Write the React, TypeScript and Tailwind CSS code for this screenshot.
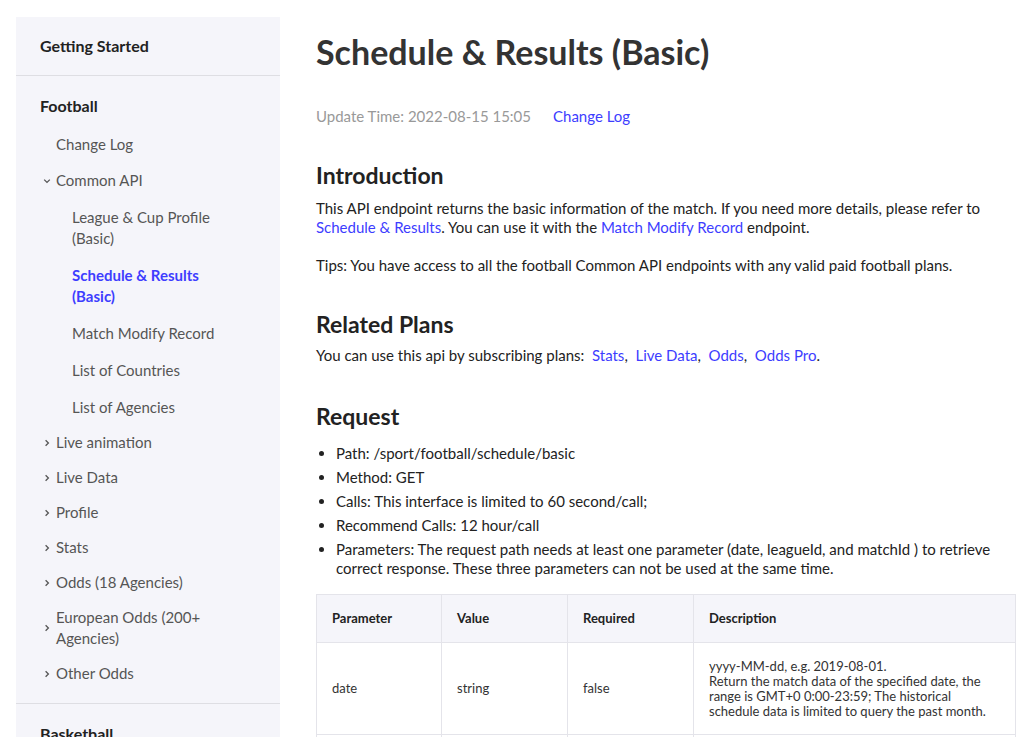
import React from "react";

const Chevron: React.FC<{ down?: boolean }> = ({ down }) => (
  <svg
    width="10"
    height="10"
    viewBox="0 0 10 10"
    className="shrink-0"
    fill="none"
    stroke="#555"
    strokeWidth="1.3"
  >
    {down ? <path d="M2.2 3.6 L5 6.4 L7.8 3.6" /> : <path d="M3.6 2.2 L6.4 5 L3.6 7.8" />}
  </svg>
);

const subItems = [
  { label: "League & Cup Profile (Basic)" },
  { label: "Schedule & Results (Basic)", active: true },
  { label: "Match Modify Record" },
  { label: "List of Countries" },
  { label: "List of Agencies" },
];

const groups = [
  "Live animation",
  "Live Data",
  "Profile",
  "Stats",
  "Odds (18 Agencies)",
  "European Odds (200+ Agencies)",
  "Other Odds",
];

const Sidebar: React.FC = () => (
  <aside className="w-[264px] shrink-0 bg-[#f5f5fa] text-[15px] text-[#555]">
    <div className="px-6 pt-[18px] pb-[18px] border-b border-[#dedee3]">
      <div className="text-[16px] leading-[22px] font-bold text-[#222]">Getting Started</div>
    </div>
    <div className="px-6 pt-[19px] pb-[19px] border-b border-[#dedee3]">
      <div className="text-[16px] leading-[22px] font-bold text-[#222] mb-[17px]">Football</div>
      <div className="pl-4 leading-[21px]">
        <div className="mb-[15px]">Change Log</div>
        <div className="flex items-center gap-[4px] -ml-[14px] mb-[16px]">
          <Chevron down />
          <span>Common API</span>
        </div>
        <div className="pl-4 flex flex-col gap-[16px] pr-10 mb-[14px]">
          {subItems.map((s) =>
            s.active ? (
              <div key={s.label} className="text-[#3d3dff] font-bold">
                {s.label}
              </div>
            ) : (
              <div key={s.label}>{s.label}</div>
            )
          )}
        </div>
        <div className="flex flex-col gap-[14px] -ml-[14px] pr-10">
          {groups.map((g) => (
            <div key={g} className="flex items-center gap-[4px]">
              <Chevron />
              <span>{g}</span>
            </div>
          ))}
        </div>
      </div>
    </div>
    <div className="px-6 pt-[19px] pb-4">
      <div className="text-[16px] leading-[22px] font-bold text-[#222]">Basketball</div>
    </div>
  </aside>
);

const Link: React.FC<{ children: React.ReactNode }> = ({ children }) => (
  <a className="text-[#3d3dff] cursor-pointer">{children}</a>
);

const App: React.FC = () => {
  return (
    <div
      className="flex h-[737px] overflow-hidden bg-white pl-4 pt-[17px] gap-9"
      style={{ fontFamily: "Lato, 'Noto Sans', sans-serif" }}
    >
      <Sidebar />
      <main className="flex-1 pr-4 text-[15px] text-[#222]">
        <h1 className="text-[34px] font-bold text-[#333] leading-[40px] mt-[15px]">
          Schedule &amp; Results (Basic)
        </h1>
        <div className="flex gap-[22px] mt-[34px] text-[#999] leading-[20px]">
          <span>Update Time: 2022-08-15 15:05</span>
          <Link>Change Log</Link>
        </div>

        <h2 className="text-[23px] font-bold mt-[35px] leading-[28px]">Introduction</h2>
        <p className="leading-[19px] mt-[10px]">
          This API endpoint returns the basic information of the match. If you need more
          details, please refer to <Link>Schedule &amp; Results</Link>. You can use it with the{" "}
          <Link>Match Modify Record</Link> endpoint.
        </p>
        <p className="leading-[19px] mt-[19px]">
          Tips: You have access to all the football Common API endpoints with any valid paid
          football plans.
        </p>

        <h2 className="text-[23px] font-bold mt-[35px] leading-[28px]">Related Plans</h2>
        <p className="leading-[19px] mt-[8px]">
          You can use this api by subscribing plans:&nbsp; <Link>Stats</Link>,&nbsp;{" "}
          <Link>Live Data</Link>,&nbsp; <Link>Odds</Link>,&nbsp; <Link>Odds Pro</Link>.
        </p>

        <h2 className="text-[23px] font-bold mt-[37px] leading-[28px]">Request</h2>
        <ul className="list-disc pl-5 mt-[14px] flex flex-col gap-[5px] leading-[19px] marker:text-[#222]">
          <li>Path: /sport/football/schedule/basic</li>
          <li>Method: GET</li>
          <li>Calls: This interface is limited to 60 second/call;</li>
          <li>Recommend Calls: 12 hour/call</li>
          <li>
            Parameters: The request path needs at least one parameter (date, leagueId, and
            matchId ) to retrieve correct response. These three parameters can not be used at
            the same time.
          </li>
        </ul>

        <table className="mt-[16px] w-[700px] border-collapse text-[13px] text-[#333] table-fixed">
          <colgroup>
            <col className="w-[125px]" />
            <col className="w-[126px]" />
            <col className="w-[126px]" />
            <col />
          </colgroup>
          <thead>
            <tr className="bg-[#f5f5fa] h-[48px]">
              {["Parameter", "Value", "Required", "Description"].map((h) => (
                <th
                  key={h}
                  className="border border-[#e4e4ea] px-[15px] text-left font-bold text-[#222]"
                >
                  {h}
                </th>
              ))}
            </tr>
          </thead>
          <tbody>
            <tr className="h-[92px]">
              <td className="border border-[#e4e4ea] px-[15px]">date</td>
              <td className="border border-[#e4e4ea] px-[15px]">string</td>
              <td className="border border-[#e4e4ea] px-[15px]">false</td>
              <td className="border border-[#e4e4ea] px-[15px] leading-[15px]">
                yyyy-MM-dd, e.g. 2019-08-01.
                <br />
                Return the match data of the specified date, the range is GMT+0 0:00-23:59; The
                historical schedule data is limited to query the past month.
              </td>
            </tr>
            <tr className="h-[40px]">
              <td className="border border-[#e4e4ea] px-[15px]"></td>
              <td className="border border-[#e4e4ea] px-[15px]"></td>
              <td className="border border-[#e4e4ea] px-[15px]"></td>
              <td className="border border-[#e4e4ea] px-[15px]"></td>
            </tr>
          </tbody>
        </table>
      </main>
    </div>
  );
};

export default App;
